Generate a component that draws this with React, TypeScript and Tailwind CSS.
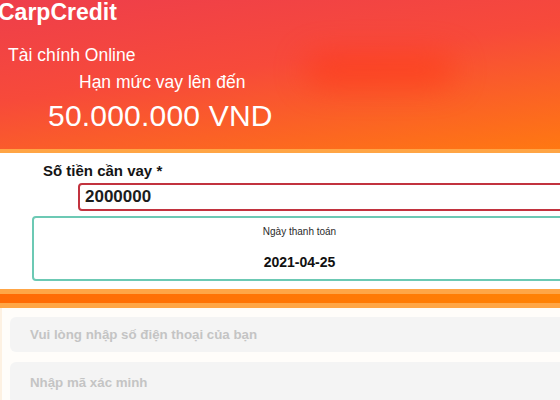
import React from "react";

export default function App() {
  return (
    <div
      className="relative w-[560px] h-[400px] overflow-hidden bg-white"
      style={{ fontFamily: '"Liberation Sans", Arial, sans-serif' }}
    >
      {/* Header */}
      <div className="relative h-[153px] border-b-4 border-[#ffa545] bg-[linear-gradient(172deg,#ee3e4b_0%,#f74a3a_45%,#ff7812_100%)]">
        <div className="absolute left-[305px] top-[55px] w-[150px] h-[30px] rounded-full bg-[#ff3512] opacity-60 blur-lg" />
        <div className="relative flex flex-col text-white">
          <div className="ml-[-2px] h-[25px] text-[23px] leading-[25px] font-bold">CarpCredit</div>
          <div className="ml-[8px] mt-[18px] h-[24px] text-[17.5px] leading-[24px]">Tài chính Online</div>
          <div className="ml-[79px] mt-[3px] h-[24px] text-[17.5px] leading-[24px]">Hạn mức vay lên đến</div>
          <div className="ml-[48px] mt-[4px] h-[36px] text-[30px] leading-[36px] tracking-[0.2px]">50.000.000 VND</div>
        </div>
      </div>

      {/* Loan form */}
      <div className="flex flex-col pt-[8px] h-[136px]">
        <div className="ml-[43px] h-[20px] text-[15px] leading-[20px] font-bold text-[#141414]">Số tiền cần vay *</div>
        <div className="ml-[78px] mt-[2px] w-[520px] h-[28px] rounded-[4px] border-2 border-[#c2333f] pl-[5px] text-[17px] leading-[24px] font-bold text-[#1c1c1c]">
          2000000
        </div>
        <div className="ml-[32px] mt-[5px] w-[535px] h-[65px] rounded-[4px] border-2 border-[#6cc9b4] flex flex-col items-center pt-[7px]">
          <div className="h-[14px] text-[10px] leading-[14px] text-[#2a2a2a]">Ngày thanh toán</div>
          <div className="mt-[13px] h-[20px] text-[14px] leading-[20px] font-bold text-[#111]">2021-04-25</div>
        </div>
      </div>

      {/* Stripe */}
      <div className="h-[19px] border-y-[5px] border-[#ffa646] bg-[linear-gradient(90deg,#ff6a05,#ff8205)]" />

      {/* Bottom inputs */}
      <div className="flex flex-col pl-[10px] pt-[9px] h-[200px] bg-[#fffdfa] border-l-2 border-[#fdf1e2]">
        <div className="ml-[-2px] w-[560px] h-[35px] rounded-[6px] bg-[#f4f4f4] flex items-center pl-[20px] text-[13.3px] font-bold text-[#c4c4c4]">
          Vui lòng nhập số điện thoại của bạn
        </div>
        <div className="ml-[-2px] mt-[10px] w-[560px] h-[42px] rounded-[6px] bg-[#f4f4f4] flex items-center pl-[20px] text-[13.3px] font-bold text-[#c4c4c4]">
          Nhập mã xác minh
        </div>
      </div>
    </div>
  );
}
